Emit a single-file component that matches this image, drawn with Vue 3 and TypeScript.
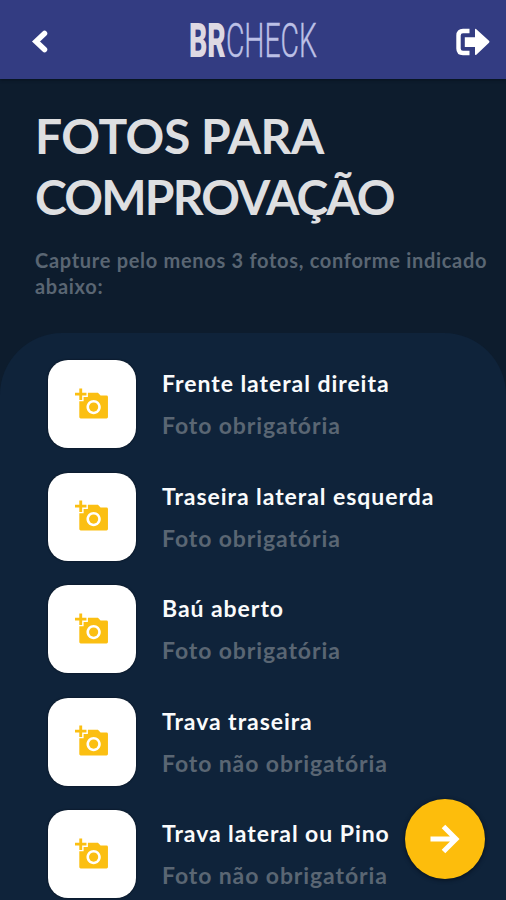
<script setup lang="ts">
interface Photo {
  title: string
  required: boolean
}

const photos: Photo[] = [
  { title: 'Frente lateral direita', required: true },
  { title: 'Traseira lateral esquerda', required: true },
  { title: 'Baú aberto', required: true },
  { title: 'Trava traseira', required: false },
  { title: 'Trava lateral ou Pino', required: false },
]
</script>

<template>
  <div class="screen">
    <header class="bar">
      <button class="icon-btn" aria-label="Voltar">
        <svg width="17" height="24" viewBox="0 0 17 24"><path d="M13.500 3.500 5 11.500l8.500 8" fill="none" stroke="#fff" stroke-width="5.500" stroke-linecap="round" /></svg>
      </button>
      <svg class="logo" width="130" height="44" viewBox="0 0 130 44">
        <text x="-1" y="39" textLength="128" lengthAdjust="spacingAndGlyphs"><tspan class="logo-bold">BR</tspan><tspan class="logo-thin">CHECK</tspan></text>
      </svg>
      <button class="icon-btn" aria-label="Sair">
        <svg width="34" height="28" viewBox="0 0 34 28">
          <path d="M13.500 3H7Q2.500 3 2.500 7.500v13q0 4.500 4.500 4.500h6.500" fill="none" stroke="#fff" stroke-width="4.400" />
          <path d="M8.800 9.200H19V2q0-2 1.600-.6L33 12.800q1 1 0 2L20.600 26.400Q19 27.600 19 26v-7H8.800z" fill="#fff" />
        </svg>
      </button>
    </header>

    <section class="intro">
      <h1><span class="line first">FOTOS PARA</span><span class="line second">COMPROVAÇÃO</span></h1>
      <p>Capture pelo menos 3 fotos, conforme indicado abaixo:</p>
    </section>

    <main class="panel">
      <div v-for="photo in photos" :key="photo.title" class="row">
        <button class="tile" :aria-label="photo.title">
          <svg width="34.400" height="34.400" viewBox="0 0 24 24" fill="#fbbf12">
            <path d="M3 4V1h2v3h3v2H5v3H3V6H0V4zm3 6V7h3V4h7l1.830 2H22q1 0 1 1v14q0 1-1 1H4q-1 0-1-1V10zm7 9c2.760 0 5-2.240 5-5s-2.240-5-5-5-5 2.240-5 5 2.240 5 5 5z" />
            <circle cx="13" cy="14" r="3.200" />
          </svg>
        </button>
        <div class="text">
          <div class="name">{{ photo.title }}</div>
          <div class="hint">{{ photo.required ? 'Foto obrigatória' : 'Foto não obrigatória' }}</div>
        </div>
      </div>
    </main>

    <button class="fab" aria-label="Avançar">
      <svg width="32" height="32" viewBox="0 0 32 32"><path d="M1.500 16H27M14.500 3.500 27 16 14.500 28.500" fill="none" stroke="#fff" stroke-width="5" /></svg>
    </button>
  </div>
</template>

<style>
body {
  margin: 0;
  background: #0f233a;
}
</style>

<style scoped>
.screen {
  position: relative;
  width: 506px;
  height: 900px;
  overflow: hidden;
  display: flex;
  flex-direction: column;
  background: #0d1c2d;
  font-family: Lato, sans-serif;
  font-weight: 700;
}
button {
  border: 0;
  padding: 0;
  background: none;
  display: flex;
  align-items: center;
  justify-content: center;
}
.bar {
  flex: none;
  box-sizing: border-box;
  height: 79px;
  padding: 4px 16px 0 31px;
  display: flex;
  align-items: center;
  justify-content: space-between;
  background: #333c82;
  box-shadow: 0 1px 3px #07121f;
}
.logo {
  margin: -4px 0 0 5px;
  overflow: visible;
}
.logo text {
  font-family: Roboto, sans-serif;
  font-size: 47.500px;
}
.logo-bold {
  font-weight: 900;
  fill: #ded9e3;
}
.logo-thin {
  font-weight: 300;
  fill: #bcc0e6;
  stroke: #bcc0e6;
  stroke-width: 0.400px;
}
.intro {
  flex: none;
  height: 254px;
  padding: 26px 0 0 35px;
  box-sizing: border-box;
}
h1 {
  margin: 0;
  color: #dedfe1;
  font-size: 48px;
  line-height: 61px;
  font-weight: 700;
}
.line {
  display: block;
  white-space: nowrap;
}
.first {
  letter-spacing: -0.500px;
}
.second {
  letter-spacing: -1.800px;
}
p {
  margin: 21px 0 0;
  color: #5a6673;
  font-size: 20px;
  line-height: 25.500px;
  letter-spacing: 0.700px;
}
.panel {
  flex: 1;
  box-sizing: border-box;
  padding: 27px 0 0 48px;
  display: flex;
  flex-direction: column;
  gap: 24.500px;
  background: #0f233a;
  border-radius: 62px 62px 0 0;
}
.row {
  flex: none;
  display: flex;
  gap: 26px;
}
.tile {
  flex: none;
  width: 88px;
  height: 88px;
  border-radius: 20px;
  background: #fff;
  box-shadow: 0 0 2px #050d18;
}
.tile svg {
  margin: 0 0 0 1px;
}
.text {
  padding-top: 8px;
  white-space: nowrap;
  font-size: 23px;
  line-height: 30px;
}
.name {
  color: #fafbfc;
  letter-spacing: 0.950px;
}
.hint {
  margin-top: 12px;
  color: #5a6673;
  letter-spacing: 0.900px;
}
.fab {
  position: absolute;
  right: 21px;
  bottom: 21px;
  width: 80px;
  height: 80px;
  border-radius: 50%;
  background: #fdbd0c;
  box-shadow: 0 1px 4px #06101d;
}
</style>
